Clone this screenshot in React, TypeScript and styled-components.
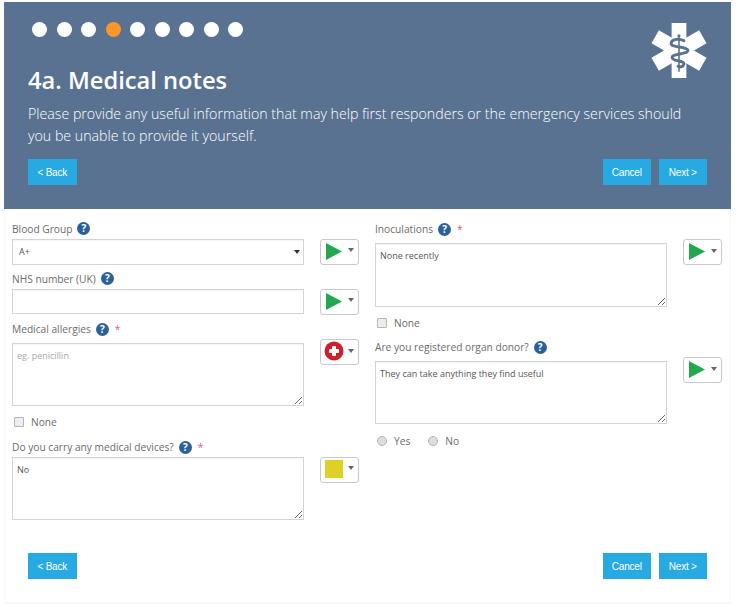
import styled, { createGlobalStyle } from "styled-components";

const COLORS = {
  HEADER: "#5a7292",
  BLUE: "#27a9e1",
  HELP: "#2b6099",
  LABEL: "#6b6b6b",
  BORDER: "#d4d4d4",
  GREEN: "#22a94f",
  RED: "#cf1f2e",
  YELLOW: "#ded024",
};

const GlobalStyle = createGlobalStyle`
  html, body {
    margin: 0;
    background: #fff;
  }
  body {
    font-family: "Open Sans", sans-serif;
  }
`;

const Page = styled.div`
  width: 736px;
  height: 609px;
  padding: 2px 5px 0 4px;
  box-sizing: border-box;
  overflow: hidden;
`;

const Card = styled.div`
  height: 602px;
  box-sizing: border-box;
  border-bottom: 2px solid #f6f7f9;
  border-right: 1px solid #f6f7f9;
  border-left: 1px solid #f9fafb;
`;

const Header = styled.header`
  height: 207px;
  margin: 0 -1px;
  box-sizing: border-box;
  padding: 20px 24px 0;
  background: ${COLORS.HEADER};
  color: #fff;
`;

const TopRow = styled.div`
  height: 43px;
  padding-left: 4px;
  display: flex;
  justify-content: space-between;
  align-items: flex-start;
`;

const Dots = styled.div`
  display: flex;
  gap: 9.5px;
`;

const Dot = styled.span<{ $active?: boolean }>`
  width: 15px;
  height: 15px;
  border-radius: 50%;
  background: ${(p) => (p.$active ? "#f7982b" : "#fff")};
`;

const Logo = styled.svg`
  width: 56px;
  height: 55px;
  flex: none;
  margin-top: 1px;
`;

const Title = styled.h1`
  margin: 0;
  font-size: 23.7px;
  line-height: 30px;
  font-weight: 600;
`;

const Description = styled.p`
  margin: 8px 0 0;
  font-size: 14.2px;
  line-height: 21.5px;
  font-weight: 300;
`;

const Actions = styled.div`
  display: flex;
  justify-content: space-between;
`;

const HeaderActions = styled(Actions)`
  margin-top: 13px;
`;

const FooterActions = styled(Actions)`
  margin-top: 33px;
  padding: 0 23px;
`;

const ActionGroup = styled.div`
  display: flex;
  gap: 7.5px;
`;

const Button = styled.button`
  height: 26px;
  width: 48.5px;
  padding: 0;
  border: 0;
  background: ${COLORS.BLUE};
  color: #fff;
  font-family: "Liberation Sans", sans-serif;
  font-size: 10px;
  letter-spacing: -0.2px;
`;

const Form = styled.div`
  display: flex;
  gap: 16px;
  padding: 10px 0 0 7px;
  height: 311px;
  box-sizing: border-box;
`;

const Column = styled.div`
  width: 347px;
  display: flex;
  flex-direction: column;
`;

const FieldLabel = styled.div<{ $top?: number }>`
  height: 20px;
  margin-top: ${(p) => p.$top ?? 0}px;
  display: flex;
  align-items: center;
  gap: 5px;
  font-size: 10.2px;
  color: ${COLORS.LABEL};
`;

const Help = styled.span`
  width: 13px;
  height: 13px;
  border-radius: 50%;
  background: ${COLORS.HELP};
  color: #fff;
  font-size: 10px;
  font-weight: 700;
  line-height: 13px;
  text-align: center;
`;

const Required = styled.span`
  color: #e4566b;
  font-size: 10px;
  margin-left: 1px;
`;

const ControlRow = styled.div`
  display: flex;
  gap: 16px;
  align-items: flex-start;
`;

const SelectWrap = styled.div`
  position: relative;
  width: 292px;
  flex: none;

  &::after {
    content: "";
    position: absolute;
    right: 4px;
    top: 11px;
    border: 3px solid transparent;
    border-top: 4px solid #333;
    border-bottom: 0;
  }
`;

const inputBase = `
  display: block;
  width: 292px;
  flex: none;
  box-sizing: border-box;
  margin: 0;
  border: 1px solid ${COLORS.BORDER};
  border-radius: 0;
  background: #fff;
  outline: none;
  font-family: "Open Sans", sans-serif;
  font-size: 9px;
  color: #555;
  box-shadow: inset 0 1px 1px rgba(0, 0, 0, 0.04);
`;

const Select = styled.select`
  ${inputBase}
  height: 26px;
  padding: 0 6px;
  appearance: none;
`;

const TextInput = styled.input`
  ${inputBase}
  height: 25px;
  padding: 0 5px;
`;

const TextArea = styled.textarea<{ $spaced?: boolean; $tall?: boolean }>`
  ${inputBase}
  height: ${(p) => (p.$tall ? "64px" : "63px")};
  margin-top: ${(p) => (p.$spaced ? "4px" : "0")};
  padding: 5px 4px;
  line-height: 14px;
  resize: vertical;

  &::placeholder {
    color: #a9a9a9;
  }
`;

const StatusButton = styled.div`
  width: 39px;
  height: 26px;
  flex: none;
  box-sizing: border-box;
  border: 1px solid #c9c9c9;
  border-radius: 3px;
  background: #fff;
  display: flex;
  align-items: center;
  gap: 4px;
  padding-left: 3px;
`;

const StatusIcon = styled.svg`
  width: 20px;
  height: 20px;
  flex: none;
  margin-bottom: 2px;
`;

const Caret = styled.span`
  border: 3px solid transparent;
  border-top: 4px solid #666;
  border-bottom: 0;
  margin-bottom: 3px;
`;

const OptionRow = styled.div<{ $top?: number }>`
  height: 20px;
  margin-top: ${(p) => p.$top ?? 6}px;
  padding-left: 2px;
  display: flex;
  align-items: center;
  font-size: 10.2px;
  color: ${COLORS.LABEL};
`;

const OptionLabel = styled.span`
  margin-left: 7px;
  margin-right: 18px;
`;

const CheckBox = styled.span`
  width: 10px;
  height: 10px;
  box-sizing: border-box;
  border: 1px solid #b5b5b5;
  border-radius: 1px;
  background: #eee;
`;

const RadioDot = styled(CheckBox)`
  border-radius: 50%;
  background: #ddd;
`;

type Status = "go" | "stop" | "warn";

const StatusPicker: React.FC<{ status?: Status }> = ({ status = "go" }) => (
  <StatusButton>
    <StatusIcon viewBox="0 0 20 20">
      {status === "go" && <path d="M2 2 L18 10.5 L2 19 Z" fill={COLORS.GREEN} />}
      {status === "stop" && (
        <>
          <circle cx="10" cy="10" r="9.5" fill={COLORS.RED} />
          <path
            d="M8.5 5.5h3v3h3v3h-3v3h-3v-3h-3v-3h3z"
            fill="#fff"
            stroke="#fff"
            strokeWidth="1"
            strokeLinejoin="round"
          />
        </>
      )}
      {status === "warn" && <rect x="1" y="1" width="18" height="18" fill={COLORS.YELLOW} />}
    </StatusIcon>
    <Caret />
  </StatusButton>
);

const Label: React.FC<{ text: string; required?: boolean; top?: number }> = ({
  text,
  required,
  top,
}) => (
  <FieldLabel $top={top}>
    {text}
    <Help>?</Help>
    {required && <Required>*</Required>}
  </FieldLabel>
);

const NavButtons = () => (
  <>
    <Button>&lt; Back</Button>
    <ActionGroup>
      <Button>Cancel</Button>
      <Button>Next &gt;</Button>
    </ActionGroup>
  </>
);

const App = () => (
  <Page>
    <GlobalStyle />
    <Card>
      <Header>
        <TopRow>
          <Dots>
            {[0, 1, 2, 3, 4, 5, 6, 7, 8].map((i) => (
              <Dot key={i} $active={i === 3} />
            ))}
          </Dots>
          <Logo viewBox="0 0 56 56">
            <g fill="#fff">
              <rect x="20.5" y="0" width="15" height="56" />
              <rect x="20.5" y="0" width="15" height="56" transform="rotate(60 28 28)" />
              <rect x="20.5" y="0" width="15" height="56" transform="rotate(120 28 28)" />
            </g>
            <g fill="none" stroke={COLORS.HEADER} strokeLinecap="round">
              <path d="M28 14 V49" strokeWidth="1.6" />
              <circle cx="28" cy="13" r="1.6" fill={COLORS.HEADER} strokeWidth="0" />
              <path
                d="M33 18 C26 15 20 17 20 21 C20 25 37 24 37 28 C37 32 21 31 21 35 C21 39 34 38 33 42 C32 45 29 45 27 44"
                strokeWidth="3"
              />
            </g>
          </Logo>
        </TopRow>
        <Title>4a. Medical notes</Title>
        <Description>
          Please provide any useful information that may help first responders or the emergency
          services should you be unable to provide it yourself.
        </Description>
        <HeaderActions>
          <NavButtons />
        </HeaderActions>
      </Header>

      <Form>
        <Column>
          <Label text="Blood Group" />
          <ControlRow>
            <SelectWrap>
              <Select defaultValue="A+">
                <option>A+</option>
              </Select>
            </SelectWrap>
            <StatusPicker />
          </ControlRow>
          <Label text="NHS number (UK)" top={4} />
          <ControlRow>
            <TextInput />
            <StatusPicker />
          </ControlRow>
          <Label text="Medical allergies" required top={5} />
          <ControlRow>
            <TextArea $spaced placeholder="eg. penicillin" />
            <StatusPicker status="stop" />
          </ControlRow>
          <OptionRow>
            <CheckBox />
            <OptionLabel>None</OptionLabel>
          </OptionRow>
          <Label text="Do you carry any medical devices?" required top={5} />
          <ControlRow>
            <TextArea defaultValue="No" />
            <StatusPicker status="warn" />
          </ControlRow>
        </Column>

        <Column>
          <Label text="Inoculations" required />
          <ControlRow>
            <TextArea $spaced $tall defaultValue="None recently" />
            <StatusPicker />
          </ControlRow>
          <OptionRow>
            <CheckBox />
            <OptionLabel>None</OptionLabel>
          </OptionRow>
          <Label text="Are you registered organ donor?" top={4} />
          <ControlRow>
            <TextArea $spaced defaultValue="They can take anything they find useful" />
            <StatusPicker />
          </ControlRow>
          <OptionRow $top={7}>
            <RadioDot />
            <OptionLabel>Yes</OptionLabel>
            <RadioDot />
            <OptionLabel>No</OptionLabel>
          </OptionRow>
        </Column>
      </Form>

      <FooterActions>
        <NavButtons />
      </FooterActions>
    </Card>
  </Page>
);

export default App;
